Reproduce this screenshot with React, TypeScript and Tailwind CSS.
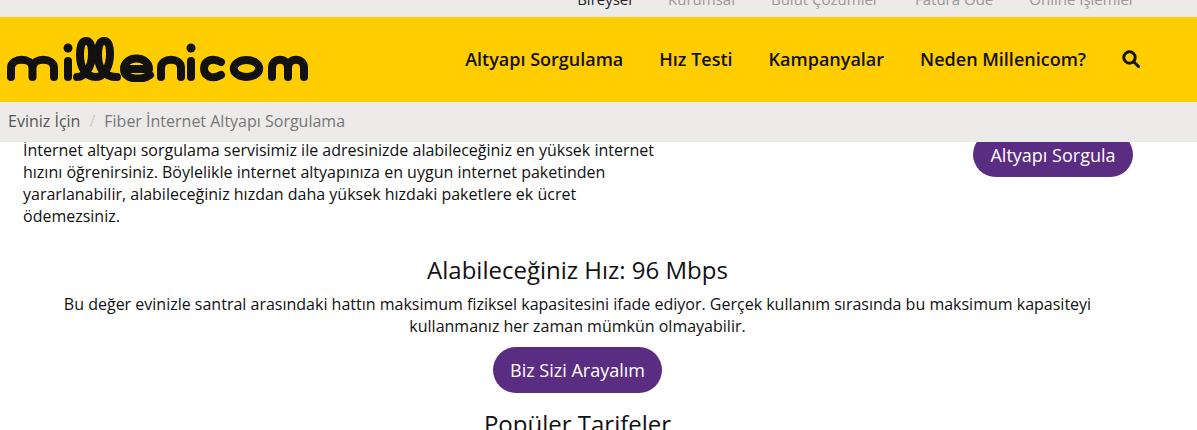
const topLinks = ['Bireysel', 'Kurumsal', 'Bulut Çözümler', 'Fatura Öde', 'Online İşlemler'];
const navLinks = ['Altyapı Sorgulama', 'Hız Testi', 'Kampanyalar', 'Neden Millenicom?'];

function Logo() {
  return (
    <svg width="302" height="45" viewBox="0 0 302 45" fill="none" stroke="#111" strokeWidth="8" strokeLinecap="round" strokeLinejoin="round">
      {/* m */}
      <path d="M4 40V31c0-11 21.500-11 21.500 0v9M25.500 31c0-11 21.500-11 21.500 0v9" />
      {/* i */}
      <path d="M61 24v16" />
      <circle cx="61" cy="11" r="4.500" fill="#111" stroke="none" />
      {/* ll */}
      <path d="M70 40C78 40 85 30 85 17C85 8 83 4 79 4C75 4 73 9 73 18C73 31 79 40 89 40C97 40 103 30 103 17C103 8 101 4 97 4C93 4 91 9 91 18C91 31 97 40 110 40" />
      {/* e */}
      <path d="M117 32H142C142 18 117 18 117 32C117 44 136 43 143 38" />
      {/* n */}
      <path d="M154 40V31c0-11 20-11 20 0v9" />
      {/* i */}
      <path d="M184 24v16" />
      <circle cx="184" cy="11" r="4.500" fill="#111" stroke="none" />
      {/* c */}
      <path d="M214 25C205 20 197 24 197 31.500C197 39 205 43 214 38" />
      {/* o */}
      <ellipse cx="239.500" cy="31.500" rx="12.750" ry="8.500" />
      {/* m */}
      <path d="M265 40V31c0-11 16-11 16 0v9M281 31c0-11 16-11 16 0v9" />
    </svg>
  );
}

export default function App() {
  return (
    <div className="h-[430px] overflow-hidden bg-white text-[#111] font-['Open_Sans',sans-serif]">
      {/* Top strip */}
      <div className="h-[17px] bg-[#ecebe9] overflow-hidden flex justify-end items-end pb-[8px] pr-[62px] gap-[36px] text-[15px] leading-[20px]">
        {topLinks.map((t, i) => (
          <span key={t} className={i === 0 ? 'text-[#222]' : 'text-[#999]'}>{t}</span>
        ))}
      </div>

      {/* Header */}
      <header className="h-[85px] bg-[#ffcd00] flex items-center justify-between pl-[7px] pr-[57px]">
        <Logo />
        <nav className="flex items-center gap-[36px] pb-[2px] text-lg font-semibold">
          {navLinks.map((t) => (
            <span key={t}>{t}</span>
          ))}
          <svg width="18" height="18" viewBox="0 0 18 18" fill="none" stroke="#111" strokeWidth="3" strokeLinecap="round">
            <circle cx="7.500" cy="7.500" r="5.700" />
            <path d="M12 12l4.500 4.500" />
          </svg>
        </nav>
      </header>

      {/* Breadcrumb */}
      <div className="relative z-10 h-10 bg-[#ecebe9] flex items-center pb-[2px] pl-2 text-base text-[#555]">
        <span>Eviniz İçin</span>
        <span className="px-[9px] text-[#ccc]">/</span>
        <span className="text-[#777]">Fiber İnternet Altyapı Sorgulama</span>
      </div>

      <main>
        {/* Intro row */}
        <div className="flex justify-between pl-[23px] pr-[64px]">
          <p className="-mt-[3px] w-[650px] text-base leading-[22px]">
            İnternet altyapı sorgulama servisimiz ile adresinizde alabileceğiniz en yüksek internet hızını öğrenirsiniz.
            Böylelikle internet altyapınıza en uygun internet paketinden yararlanabilir, alabileceğiniz hızdan daha
            yüksek hızdaki paketlere ek ücret ödemezsiniz.
          </p>
          <div className="-mt-[10px] h-[45px] w-[160px] rounded-full bg-[#5a2d82] text-white text-lg flex items-center justify-center">
            Altyapı Sorgula
          </div>
        </div>

        {/* Speed result */}
        <div className="flex flex-col items-center text-center mt-[25px] pr-[42px]">
          <h2 className="text-2xl leading-[36px]">Alabileceğiniz Hız: 96 Mbps</h2>
          <p className="w-[1060px] text-base leading-[22px] mt-[5px]">
            Bu değer evinizle santral arasındaki hattın maksimum fiziksel kapasitesini ifade ediyor. Gerçek kullanım
            sırasında bu maksimum kapasiteyi kullanmanız her zaman mümkün olmayabilir.
          </p>
          <div className="mt-[10px] h-[46px] w-[169px] rounded-full bg-[#5a2d82] text-white text-lg flex items-center justify-center">
            Biz Sizi Arayalım
          </div>
          <h2 className="text-2xl leading-[36px] mt-[13px]">Popüler Tarifeler</h2>
        </div>
      </main>
    </div>
  );
}
